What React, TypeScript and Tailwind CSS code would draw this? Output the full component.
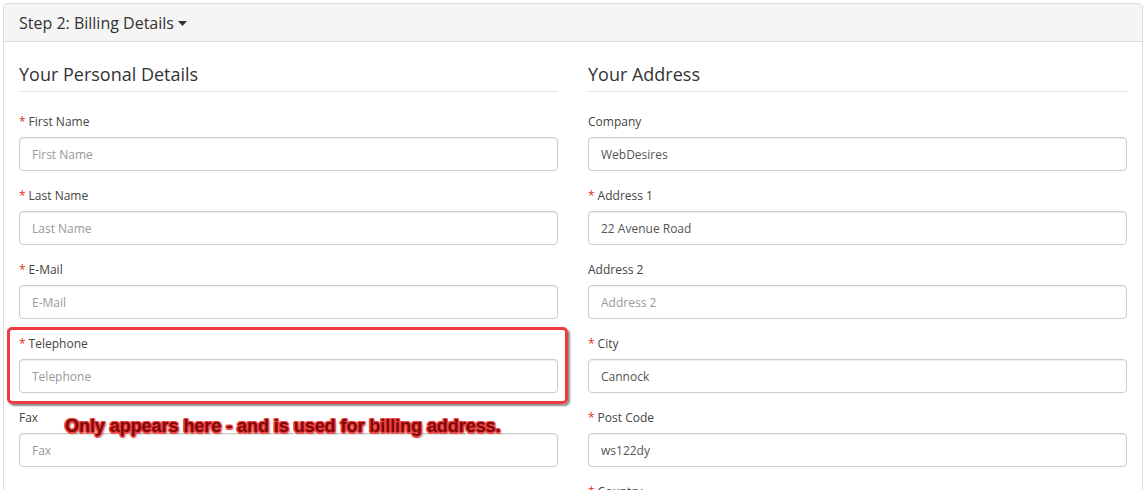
import React from "react";

type Field = {
  label: string;
  required?: boolean;
  value?: string;
};

const personalFields: Field[] = [
  { label: "First Name", required: true },
  { label: "Last Name", required: true },
  { label: "E-Mail", required: true },
  { label: "Telephone", required: true },
  { label: "Fax" },
];

const addressFields: Field[] = [
  { label: "Company", value: "WebDesires" },
  { label: "Address 1", required: true, value: "22 Avenue Road" },
  { label: "Address 2" },
  { label: "City", required: true, value: "Cannock" },
  { label: "Post Code", required: true, value: "ws122dy" },
  { label: "Country", required: true },
];

const FormField = ({ field }: { field: Field }) => {
  const isHighlighted = field.label === "Telephone";
  const hasNote = field.label === "Fax";

  return (
    <div className="relative mb-[15px]">
      <label className="block text-[12px] leading-[20px] text-[#444] mb-[5px]">
        {field.required && <span className="text-[#e0301e] mr-[3px]">*</span>}
        {field.label}
      </label>
      <input
        readOnly
        defaultValue={field.value ?? ""}
        placeholder={field.label}
        className="block w-full h-[34px] px-[12px] text-[12px] text-[#555] placeholder:text-[#999] bg-white border border-[#ccc] rounded-[4px] shadow-[inset_0_1px_1px_rgba(0,0,0,0.075)] outline-none"
      />

      {/* annotation box drawn over the telephone field */}
      {isHighlighted && (
        <div
          aria-hidden="true"
          className="absolute top-[-7px] left-[-12px] right-[-10px] bottom-[-11px] border-[3px] border-[#ee3b3f] rounded-[5px] shadow-[2px_2px_2px_rgba(0,0,0,0.45)] pointer-events-none"
        />
      )}

      {hasNote && (
        <div className="absolute left-[46px] top-[8px] whitespace-nowrap font-['Liberation_Sans',Arial,sans-serif] font-bold text-[18px] leading-[20px] tracking-[-0.05px] text-[#7d0808] [text-shadow:1.5px_0_0_#f04242,-1.5px_0_0_#f04242,0_1.5px_0_#f04242,0_-1.5px_0_#f04242,1px_1px_0_#f04242,-1px_-1px_0_#f04242,1px_-1px_0_#f04242,-1px_1px_0_#f04242,2px_2px_2px_rgba(0,0,0,0.35)]">
          Only appears here - and is used for billing address.
        </div>
      )}
    </div>
  );
};

const Fieldset = ({ title, fields }: { title: string; fields: Field[] }) => (
  <div className="flex flex-col">
    <div className="text-[18px] leading-[25px] text-[#333] pt-[5px] pb-[4px] border-b border-[#e5e5e5] mb-[20px]">
      {title}
    </div>
    {fields.map((field) => (
      <FormField key={field.label} field={field} />
    ))}
  </div>
);

export default function App() {
  return (
    <div className="w-[1148px] h-[490px] overflow-hidden bg-white pt-[3px] pl-[3px] pr-[5px] font-['Open_Sans','Noto_Sans',sans-serif]">
      <div className="border border-[#ddd] rounded-t-[4px] h-[520px]">
        <div className="h-[38px] bg-[#f5f5f5] border-b border-[#ddd] px-[15px] flex items-center rounded-t-[3px]">
          <span className="text-[16px] text-[#333]">Step 2: Billing Details</span>
          <svg width="9" height="5" viewBox="0 0 9 5" className="ml-[4px] mt-[2px]">
            <path d="M0 0 L9 0 L4.5 5 Z" fill="#333" />
          </svg>
        </div>
        <div className="p-[15px] grid grid-cols-2 gap-[30px]">
          <Fieldset title="Your Personal Details" fields={personalFields} />
          <Fieldset title="Your Address" fields={addressFields} />
        </div>
      </div>
    </div>
  );
}
